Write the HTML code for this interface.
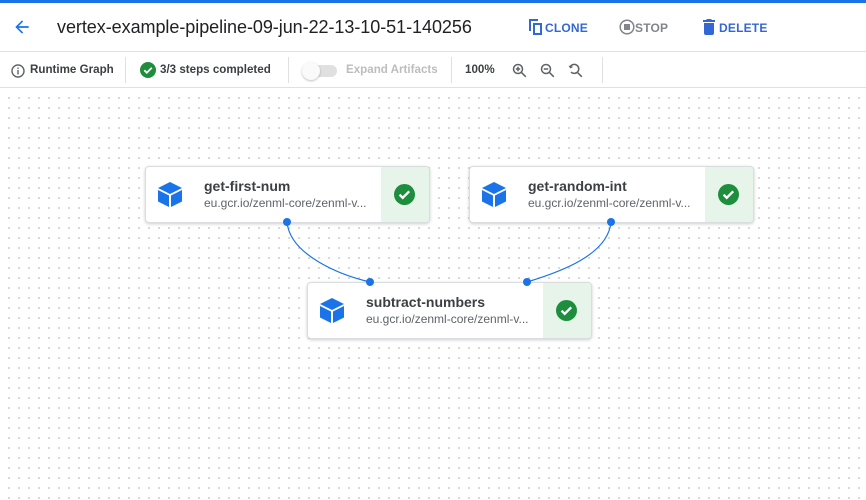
<!DOCTYPE html>
<html><head><meta charset="utf-8"><style>
*{margin:0;padding:0;box-sizing:border-box}
body{width:866px;height:500px;overflow:hidden;font-family:"Liberation Sans",Roboto,sans-serif;background:#fff;position:relative}
.topbar{position:absolute;left:0;top:0;width:866px;height:3px;background:#1a73e8}
.header{position:absolute;left:0;top:3px;width:866px;height:49px;border-bottom:1px solid #e0e0e0}
.title{position:absolute;left:57px;top:14px;font-size:18px;color:#202124;letter-spacing:-0.05px}
.btn{position:absolute;top:18px;font-size:12px;font-weight:bold;color:#3367d6;letter-spacing:0.2px}
.tool{position:absolute;top:52px;left:0;width:866px;height:36px;border-bottom:1px solid #e0e0e0;font-size:11.6px;color:#3c4043;font-weight:bold}
.tool span{position:absolute;top:11px}
.sep{position:absolute;top:5px;width:1px;height:26px;background:#e0e0e0}
.canvas{position:absolute;top:89px;left:0;width:866px;height:411px;background-image:radial-gradient(circle,#cfcfcf 0.9px,transparent 1.1px);background-size:10px 10px;background-position:4px 4px}
.node{position:absolute;width:285px;height:57px;background:#fff;border:1px solid #dadce0;border-radius:4px;box-shadow:0 1px 3px rgba(0,0,0,.2);overflow:hidden}
.node .name{position:absolute;left:58px;top:11px;font-size:14px;font-weight:bold;color:#3c4043}
.node .img{position:absolute;left:58px;top:29px;font-size:12px;color:#5f6368}
.node .ok{position:absolute;right:0;top:0;width:48px;height:100%;background:#e6f4ea}
.node svg.cube{position:absolute;left:12px;top:15px}
.node svg.chk{position:absolute;left:13px;top:17px}
</style></head><body>
<div class="topbar"></div>
<div class="header">
<svg style="position:absolute;left:12px;top:14px" width="20" height="20" viewBox="0 0 24 24"><path d="M20 11H7.8l5.6-5.6L12 4l-8 8 8 8 1.4-1.4L7.8 13H20z" fill="#1a73e8"/></svg>
<div class="title">vertex-example-pipeline-09-jun-22-13-10-51-140256</div>
<svg style="position:absolute;left:529px;top:16px" width="14" height="16" viewBox="0 0 14 16"><path d="M0 0h9v2H2v10H0z M4 4h9v12H4z M6 6v8h5V6z" fill="#3367d6" fill-rule="evenodd"/></svg>
<div class="btn" style="left:545px">CLONE</div>
<svg style="position:absolute;left:619px;top:16px" width="16" height="16" viewBox="0 0 16 16"><circle cx="8" cy="8" r="6.8" fill="none" stroke="#80868b" stroke-width="1.5"/><rect x="5" y="5" width="6" height="6" fill="#80868b"/></svg>
<div class="btn" style="left:635px;color:#80868b">STOP</div>
<svg style="position:absolute;left:703px;top:16px" width="12" height="16" viewBox="0 0 12 16"><path d="M4 0h4l1 1h3v2H0V1h3z M1 4h10v10q0 2-2 2H3q-2 0-2-2z" fill="#3367d6"/></svg>
<div class="btn" style="left:719px">DELETE</div>
</div>
<div class="tool">
<svg style="position:absolute;left:11px;top:12px" width="14" height="14" viewBox="0 0 14 14"><circle cx="7" cy="7" r="6" fill="none" stroke="#5f6368" stroke-width="1.4"/><rect x="6.3" y="6" width="1.4" height="4.5" fill="#5f6368"/><rect x="6.3" y="3.5" width="1.4" height="1.4" fill="#5f6368"/></svg>
<span style="left:30px">Runtime Graph</span>
<div class="sep" style="left:125px"></div>
<svg style="position:absolute;left:140px;top:10px" width="16" height="16" viewBox="0 0 16 16"><circle cx="8" cy="8" r="8" fill="#1e8e3e"/><path d="M4.3 8.2l2.5 2.5 5-5" fill="none" stroke="#fff" stroke-width="1.8"/></svg>
<span style="left:160px">3/3 steps completed</span>
<div class="sep" style="left:288px"></div>
<div style="position:absolute;left:303px;top:13px;width:34px;height:12px;border-radius:6px;background:#e0e0e0"></div>
<div style="position:absolute;left:302px;top:10px;width:18px;height:18px;border-radius:9px;background:#fafafa;box-shadow:0 1px 2px rgba(0,0,0,.25)"></div>
<span style="left:346px;color:#bdbdbd">Expand Artifacts</span>
<div class="sep" style="left:451px"></div>
<span style="left:465px">100%</span>
<svg style="position:absolute;left:512px;top:11px" width="15" height="15" viewBox="0 0 15 15"><circle cx="6" cy="6" r="4.5" fill="none" stroke="#5f6368" stroke-width="1.5"/><path d="M9.3 9.3l4.5 4.5M6 3.8v4.4M3.8 6h4.4" stroke="#5f6368" stroke-width="1.5"/></svg>
<svg style="position:absolute;left:540px;top:11px" width="15" height="15" viewBox="0 0 15 15"><circle cx="6" cy="6" r="4.5" fill="none" stroke="#5f6368" stroke-width="1.5"/><path d="M9.3 9.3l4.5 4.5M3.8 6h4.4" stroke="#5f6368" stroke-width="1.5"/></svg>
<svg style="position:absolute;left:568px;top:11px" width="15" height="15" viewBox="0 0 15 15"><path d="M2 4.5A4.5 4.5 0 1 1 3 9" fill="none" stroke="#5f6368" stroke-width="1.5"/><path d="M0.5 2.5l1.8 3 3-1.6z" fill="#5f6368"/><path d="M9.8 9.8l4 4" stroke="#5f6368" stroke-width="1.5"/></svg>
<div class="sep" style="left:602px"></div>
</div>
<div class="canvas"></div>
<svg style="position:absolute;left:0;top:0" width="866" height="500">
<path d="M287 222 C 290 255, 340 275, 370 282" fill="none" stroke="#1a73e8" stroke-width="1.2"/>
<path d="M611 222 C 608 255, 560 272, 527 282" fill="none" stroke="#1a73e8" stroke-width="1.2"/>
</svg>
<div class="node" style="left:145px;top:166px"><svg class="cube" width="24" height="25" viewBox="0 0 24 25"><path d="M12 0L24 6 12 12 0 6z" fill="#1a73e8"/><path d="M0 8l11 5.5V25L0 19.5z M24 8l-11 5.5V25l11-5.5z" fill="#1a73e8"/></svg><div class="name">get-first-num</div><div class="img">eu.gcr.io/zenml-core/zenml-v...</div><div class="ok"><svg class="chk" width="21" height="21" viewBox="0 0 20 20"><circle cx="10" cy="10" r="10" fill="#1e8e3e"/><path d="M5.3 10.2l3 3 6.2-6.2" fill="none" stroke="#fff" stroke-width="2.2"/></svg></div></div>
<div class="node" style="left:469px;top:166px"><svg class="cube" width="24" height="25" viewBox="0 0 24 25"><path d="M12 0L24 6 12 12 0 6z" fill="#1a73e8"/><path d="M0 8l11 5.5V25L0 19.5z M24 8l-11 5.5V25l11-5.5z" fill="#1a73e8"/></svg><div class="name">get-random-int</div><div class="img">eu.gcr.io/zenml-core/zenml-v...</div><div class="ok"><svg class="chk" width="21" height="21" viewBox="0 0 20 20"><circle cx="10" cy="10" r="10" fill="#1e8e3e"/><path d="M5.3 10.2l3 3 6.2-6.2" fill="none" stroke="#fff" stroke-width="2.2"/></svg></div></div>
<div class="node" style="left:307px;top:282px"><svg class="cube" width="24" height="25" viewBox="0 0 24 25"><path d="M12 0L24 6 12 12 0 6z" fill="#1a73e8"/><path d="M0 8l11 5.5V25L0 19.5z M24 8l-11 5.5V25l11-5.5z" fill="#1a73e8"/></svg><div class="name">subtract-numbers</div><div class="img">eu.gcr.io/zenml-core/zenml-v...</div><div class="ok"><svg class="chk" width="21" height="21" viewBox="0 0 20 20"><circle cx="10" cy="10" r="10" fill="#1e8e3e"/><path d="M5.3 10.2l3 3 6.2-6.2" fill="none" stroke="#fff" stroke-width="2.2"/></svg></div></div>
<svg style="position:absolute;left:0;top:0" width="866" height="500">
<circle cx="287" cy="222" r="4" fill="#1a73e8"/><circle cx="611" cy="222" r="4" fill="#1a73e8"/>
<circle cx="370" cy="282" r="4" fill="#1a73e8"/><circle cx="527" cy="282" r="4" fill="#1a73e8"/>
</svg>
</body></html>
